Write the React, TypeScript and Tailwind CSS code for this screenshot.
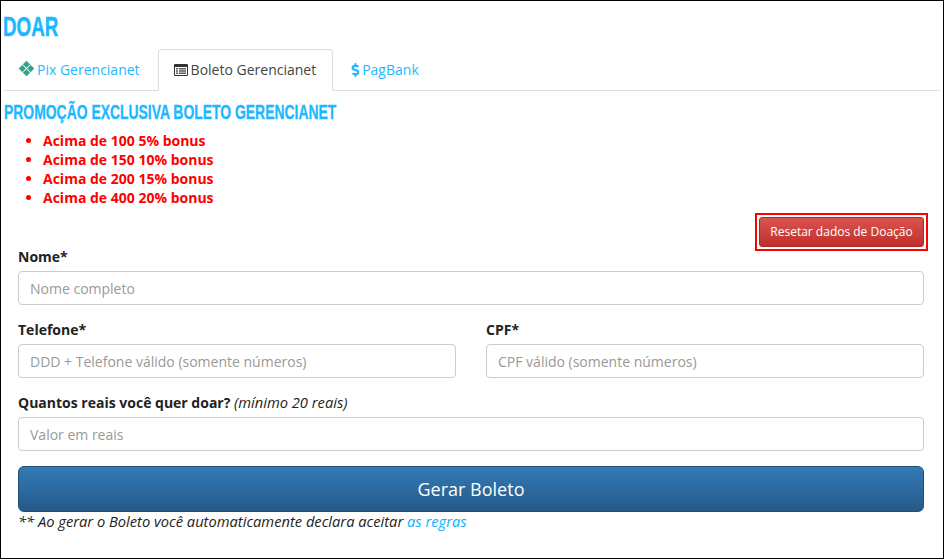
import React from 'react';
import { FaDollarSign } from 'react-icons/fa';

const headingFont = "font-['Liberation_Sans',sans-serif]";
const inputClass =
    'block w-full h-[34px] pl-[11px] pr-3 rounded border border-[#ccc] bg-white text-sm text-[#555] placeholder:text-[#999] outline-none';

const BONUS = ['Acima de 100 5% bonus', 'Acima de 150 10% bonus', 'Acima de 200 15% bonus', 'Acima de 400 20% bonus'];

const PixIcon = () => (
    <svg viewBox="0 0 16 16" className="inline-block size-[15px] text-[#32a08a] mr-[3px] align-[-1px]" fill="currentColor">
        <path d="M8 0 L11.6 3.6 L8 7 L4.4 3.6 Z" stroke="currentColor" strokeWidth="0.6" strokeLinejoin="round" />
        <path d="M3.6 4.4 L7 8 L3.6 11.6 L0 8 Z" stroke="currentColor" strokeWidth="0.6" strokeLinejoin="round" />
        <path d="M12.4 4.4 L16 8 L12.4 11.6 L9 8 Z" stroke="currentColor" strokeWidth="0.6" strokeLinejoin="round" />
        <path d="M8 9 L11.6 12.4 L8 16 L4.4 12.4 Z" stroke="currentColor" strokeWidth="0.6" strokeLinejoin="round" />
    </svg>
);

// list-alt from the old icon font: outlined box, solid header band, text lines
const ListIcon = () => (
    <svg viewBox="0 0 14 12" className="inline-block w-[14px] h-[12px] mr-[3px] align-[-1px] text-[#333]" fill="currentColor">
        <path d="M1 0 H13 A1 1 0 0 1 14 1 V11 A1 1 0 0 1 13 12 H1 A1 1 0 0 1 0 11 V1 A1 1 0 0 1 1 0 Z M1 3 V11 H13 V3 Z" fillRule="evenodd" />
        <rect x="2" y="4.2" width="2" height="1.2" />
        <rect x="5" y="4.2" width="7" height="1.2" />
        <rect x="2" y="6.4" width="2" height="1.2" />
        <rect x="5" y="6.4" width="7" height="1.2" />
        <rect x="2" y="8.6" width="2" height="1.2" />
        <rect x="5" y="8.6" width="7" height="1.2" />
    </svg>
);

const App: React.FC = () => {
    return (
        <div className="w-[944px] h-[559px] border border-black bg-white overflow-hidden font-['Open_Sans',sans-serif] text-sm text-[#333] flex flex-col">
            <div className="pl-[3px] pr-[3px]">
                {/* Title */}
                <h1 className={`${headingFont} -ml-px text-[28px] font-bold leading-[30px] text-[#1cb8ff] mt-[11px] scale-x-[0.67] origin-left [-webkit-text-stroke:0.5px_#1cb8ff]`}>DOAR</h1>

                {/* Tabs */}
                <div className="flex h-[42px] mt-[7px] border-b border-[#ddd] text-sm leading-5">
                    <a className="pl-[15px] pr-[15px] pt-[11px] mr-[3px] text-[#1cb8ff]">
                        <PixIcon />Pix Gerencianet
                    </a>
                    <a className="h-[42px] pl-[15px] pr-[16px] py-[10px] mr-[2px] border border-[#ddd] border-b-white rounded-t bg-white text-[#444]">
                        <ListIcon />Boleto Gerencianet
                    </a>
                    <a className="pl-[16px] pr-[15px] pt-[11px] text-[#1cb8ff]">
                        <FaDollarSign className="inline-block w-[9px] h-[14px] mr-[2px] align-[-2px]" />PagBank
                    </a>
                </div>

                <h2 className={`${headingFont} text-[20px] font-bold leading-[22px] text-[#1cb8ff] mt-[10px] uppercase scale-x-[0.696] origin-left whitespace-nowrap [-webkit-text-stroke:0.3px_#1cb8ff]`}>
                    Promoção exclusiva Boleto Gerencianet
                </h2>

                <ul className="list-disc pl-[39px] mt-[8px] font-bold text-[#f00] leading-[19px]">
                    {BONUS.map(item => (
                        <li key={item}>{item}</li>
                    ))}
                </ul>
            </div>

            <div className="flex justify-end mr-[15px] mt-[6px]">
                <div className="border-2 border-[#f00] p-[2px]">
                    <button className="block w-[165px] h-[30px] rounded-[3px] border border-[#ac2925] bg-gradient-to-b from-[#d9534f] to-[#c12e2a] text-white text-[12px]">
                        Resetar dados de Doação
                    </button>
                </div>
            </div>

            {/* Form */}
            <form className="pl-[17px] pr-[19px] mt-[-4px]">
                <label className="block font-bold text-[#222] leading-5 mb-[4px]">Nome*</label>
                <input className={inputClass} placeholder="Nome completo" />

                <div className="grid grid-cols-2 gap-x-[30px] mt-[15px]">
                    <div>
                        <label className="block font-bold text-[#222] leading-5 mb-[4px]">Telefone*</label>
                        <input className={inputClass} placeholder="DDD + Telefone válido (somente números)" />
                    </div>
                    <div>
                        <label className="block font-bold text-[#222] leading-5 mb-[4px]">CPF*</label>
                        <input className={inputClass} placeholder="CPF válido (somente números)" />
                    </div>
                </div>

                <label className="block h-5 text-[#222] leading-5 mt-[15px] mb-[4px]">
                    <b>Quantos reais você quer doar?</b> <i className="text-[14.7px] leading-none">(mínimo 20 reais)</i>
                </label>
                <input className={inputClass} placeholder="Valor em reais" />

                <button type="button" className="block w-full h-[46px] mt-[15px] rounded-md border border-[#204d74] bg-gradient-to-b from-[#337ab7] to-[#265a88] text-white text-lg">
                    Gerar Boleto
                </button>
                <p className="italic text-[14.7px] text-[#222] leading-5 -mt-px">
                    ** Ao gerar o Boleto você automaticamente declara aceitar <a className="text-[#0ab0ff]">as regras</a>
                </p>
            </form>
        </div>
    );
};

export default App;
